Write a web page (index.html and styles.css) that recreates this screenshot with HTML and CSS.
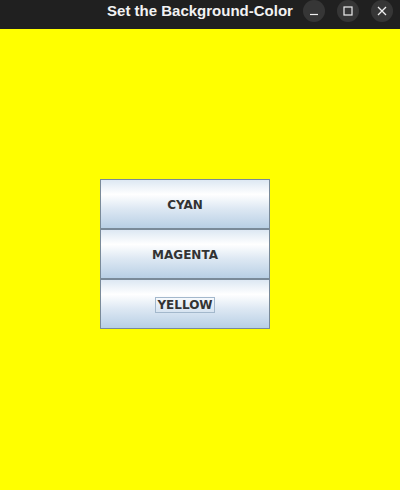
FILE: index.html
```html
<!DOCTYPE html>
<html>
<head>
<meta charset="utf-8">
<link rel="stylesheet" href="styles.css">
</head>
<body>
<div class="window">
  <div class="titlebar">
    <span class="title">Set the Background-Color</span>
    <div class="controls">
      <span class="ctl"><svg width="10" height="10" viewBox="0 0 10 10"><line x1="1" y1="8.5" x2="9" y2="8.5" stroke="#eee" stroke-width="1.2"/></svg></span>
      <span class="ctl"><svg width="10" height="10" viewBox="0 0 10 10"><rect x="1" y="1" width="8" height="8" fill="none" stroke="#eee" stroke-width="1.2"/></svg></span>
      <span class="ctl"><svg width="10" height="10" viewBox="0 0 10 10"><path d="M1 1 L9 9 M9 1 L1 9" stroke="#eee" stroke-width="1.3"/></svg></span>
    </div>
  </div>
  <div class="content">
    <div class="buttons">
      <button class="btn"><span>CYAN</span></button>
      <button class="btn"><span>MAGENTA</span></button>
      <button class="btn"><span class="focus">YELLOW</span></button>
    </div>
  </div>
</div>
</body>
</html>
```
FILE: styles.css
```css
html, body {
  margin: 0;
  padding: 0;
  width: 400px;
  height: 490px;
  overflow: hidden;
  background: #ffff00;
}
.window {
  display: flex;
  flex-direction: column;
  height: 490px;
}
.titlebar {
  height: 29px;
  background: #202020;
  position: relative;
  display: flex;
  align-items: flex-start;
  justify-content: center;
  flex: none;
}
.title {
  font-family: "Liberation Sans", Arial, sans-serif;
  font-weight: bold;
  font-size: 15px;
  line-height: 22px;
  color: #f2f2f2;
}
.controls {
  position: absolute;
  right: 7px;
  top: 0;
  height: 22px;
  display: flex;
  gap: 12px;
}
.ctl {
  width: 22px;
  height: 22px;
  border-radius: 50%;
  background: #363636;
  display: flex;
  align-items: center;
  justify-content: center;
}
.ctl svg { display: block; }
.content {
  flex: 1;
  background: #ffff00;
  padding: 150px 0 0 100px;
}
.buttons {
  display: flex;
  flex-direction: column;
  width: 170px;
}
.btn {
  box-sizing: border-box;
  width: 170px;
  height: 50px;
  margin: 0;
  padding: 2px 0 0 0;
  border: 1px solid #7a8a99;
  background: linear-gradient(to bottom, #dde8f3 0%, #ffffff 30%, #dde8f3 60%, #b8cfe5 100%);
  font-family: "DejaVu Sans", sans-serif;
  font-weight: bold;
  font-size: 12px;
  color: #333333;
  display: flex;
  align-items: center;
  justify-content: center;
}
.focus {
  border: 1px solid #a3b8cc;
  padding: 1px 1px;
  line-height: 12px;
}
```
